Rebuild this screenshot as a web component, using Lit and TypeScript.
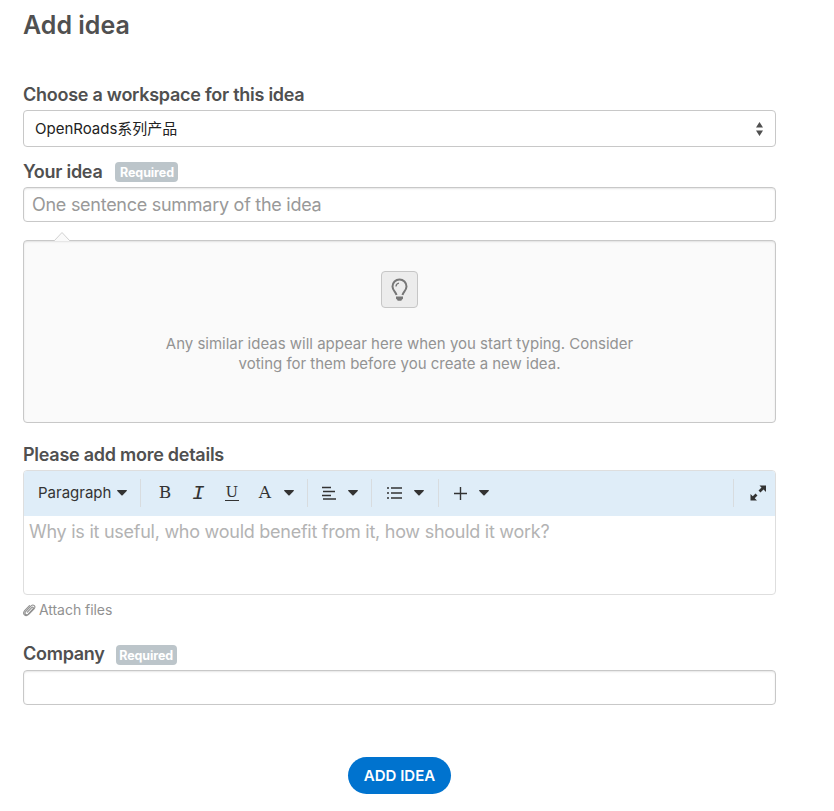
import { LitElement, html, css, svg } from "lit";
import { customElement } from "lit/decorators.js";

const caret = html`<svg class="caret" width="10" height="6" viewBox="0 0 10 6"><path d="M.6 0h8.8q.9.2.3 1L5.6 5.2q-.6.6-1.2 0L.3 1Q-.3.2.6 0z" fill="currentColor"/></svg>`;
const icon = (w: number, h: number, body: unknown) =>
  html`<svg width=${w} height=${h} viewBox="0 0 ${w} ${h}" fill="none" stroke="currentColor">${body}</svg>`;

@customElement("app-root")
export class AppRoot extends LitElement {
  static styles = css`
    :host { display: block; height: 811px; overflow: hidden; background: #fff; color: #505050; font-family: Inter, "Noto Sans CJK SC", sans-serif; }
    * { box-sizing: border-box; }
    svg { display: block; flex: none; }
    .form { width: 753px; margin-left: 23px; display: flex; flex-direction: column; }
    h1 { margin: 0; padding-top: 10px; height: 80px; font-size: 25px; line-height: 30px; font-weight: 600; }
    .label { display: flex; align-items: center; height: 30px; padding-bottom: 2px; font-size: 18px; font-weight: 600; letter-spacing: -0.26px; white-space: nowrap; }
    .idea-label { height: 40px; padding: 9px 0 0; }
    .company-label { height: 34px; margin-top: 11px; padding-bottom: 0; }
    .badge { display: flex; align-items: center; justify-content: center; width: 63px; height: 20px; margin-left: 12px; padding: 2px 0 0 2px; border-radius: 4px; background: #bcc5ca; color: #fff; font-size: 12.5px; font-weight: 700; letter-spacing: -0.1px; }
    .badge.narrow { width: 61px; margin-left: 11px; padding-left: 0; margin-top: 3px; }
    .box { display: flex; align-items: center; border: 1px solid #c8c8c8; border-radius: 4px; }
    .select { height: 37px; justify-content: space-between; padding: 0 12px 0 11px; font-size: 15px; color: #222; }
    .select span { margin-top: -2px; }
    .input { height: 35px; padding: 0 8px 1px; font-size: 18px; letter-spacing: -0.27px; color: #999; box-shadow: inset 0 1px 2px rgba(0,0,0,.1); }
    .similar { position: relative; height: 183px; margin-top: 18px; flex-direction: column; padding-top: 30px; background: #fafafa; box-shadow: inset 0 1px 2px rgba(0,0,0,.1); font-size: 15px; line-height: 20px; letter-spacing: -0.01px; color: #939393; text-align: center; }
    .notch { position: absolute; left: 30px; top: -10px; }
    .bulb { display: flex; align-items: center; justify-content: center; width: 37px; height: 37px; border: 1px solid #c6c6c6; border-radius: 4px; background: #ececec; color: #777; margin-bottom: 26px; }
    .details { height: 32px; margin-top: 16px; }
    .editor { height: 125px; margin-top: -1px; border: 1px solid #dedede; border-radius: 4px; overflow: hidden; }
    .toolbar { display: flex; align-items: center; height: 45px; padding-bottom: 1px; background: #dfedf8; color: #333; font-size: 15px; }
    .group { display: flex; align-items: center; height: 28px; border-right: 1px solid #d8dcdf; }
    .para { width: 117px; padding-left: 14px; gap: 6px; }
    .para span { margin-top: -2px; }
    .style { width: 167px; padding-left: 16px; }
    .glyph { width: 16px; font: 17px/20px "DejaVu Serif", serif; text-align: center; margin: -2px 17.4px 0 0; }
    .glyph.it { font: italic 21px/20px "Liberation Mono", monospace; margin-top: 1px; }
    .glyph.un { height: 16px; line-height: 14px; font-size: 15px; border-bottom: 1px solid #333; width: 14px; margin: -1px 18px 0 1px; }
    .glyph.last { margin-right: 11px; }
    .align { width: 64px; padding-left: 14px; gap: 12px; }
    .list { width: 67px; padding-left: 15px; gap: 12px; }
    .plus { padding-left: 15px; gap: 12px; border: 0; }
    .full { margin-left: auto; width: 42px; border-right: 0; border-left: 1px solid #d8dcdf; padding-left: 16px; }
    .hint { padding: 5px; font-size: 18px; line-height: 22px; color: #b3b3b3; letter-spacing: -0.26px; }
    .attach { display: flex; align-items: center; height: 30px; padding-bottom: 1px; gap: 3px; font-size: 14px; color: #919191; letter-spacing: -0.05px; }
    .submit { align-self: center; width: 103px; height: 37px; margin-top: 52px; padding: 0; border: 0; border-radius: 19px; background: #0073cf; color: #fff; font: 600 15px Inter, sans-serif; white-space: nowrap; }
  `;

  render() {
    return html`<div class="form">
      <h1>Add idea</h1>
      <div class="label">Choose a workspace for this idea</div>
      <div class="box select"><span>OpenRoads系列产品</span>
        <svg width="7" height="14" viewBox="0 0 7 14"><path d="M0 5.5 3.5 0 7 5.5zM0 8.5h7L3.5 14z" fill="#505050"/></svg>
      </div>
      <div class="label idea-label">Your idea<span class="badge">Required</span></div>
      <div class="box input">One sentence summary of the idea</div>
      <div class="box similar">
        <svg class="notch" width="16" height="10" viewBox="0 0 16 10"><path d="M0 10 8 1.5 16 10" fill="#fafafa" stroke="#d0d0d0"/></svg>
        <div class="bulb">${icon(18, 24, svg`<path d="M5.500 17C5 14 1.500 12.500 1.500 8.500a7 7 0 0 1 14 0c0 4-3.500 5.500-4 8.500" stroke-width="2"/><path d="M5 8.500q.2-3 3-3.300" stroke-width="1.300"/><path d="M5 18.500h7v2.200L10.500 22v.8h-4V22L5 20.700z" fill="currentColor" stroke="none"/>`)}</div>
        <div>Any similar ideas will appear here when you start typing. Consider<br>voting for them before you create a new idea.</div>
      </div>
      <div class="label details">Please add more details</div>
      <div class="editor">
        <div class="toolbar">
          <div class="group para"><span>Paragraph</span>${caret}</div>
          <div class="group style"><span class="glyph">B</span><span class="glyph it">I</span><span class="glyph un">U</span><span class="glyph last">A</span>${caret}</div>
          <div class="group align">${icon(14, 14, svg`<path d="M0 1.500h9M1 5.500h12M0 9.500h9M1 13h13" stroke-width="1.3"/>`)}${caret}</div>
          <div class="group list">${icon(15, 12, svg`<path d="M4 1h11M4 6h11M4 11h11" stroke-width="1.3"/><path d="M0 1h2M0 6h2M0 11h2" stroke-width="1.6"/>`)}${caret}</div>
          <div class="group plus">${icon(13, 13, svg`<path d="M6.500 0v13M0 6.500h13" stroke-width="1.400"/>`)}${caret}</div>
          <div class="group full">${icon(16, 16, svg`<path d="M9.500 6.500 13 3M6.500 9.500 3 13" stroke-width="2.800"/><path d="M9.500 .5H16V7zM.5 9v6.500H7z" fill="currentColor" stroke="none"/>`)}</div>
        </div>
        <div class="hint">Why is it useful, who would benefit from it, how should it work?</div>
      </div>
      <div class="attach"><svg width="13" height="14" viewBox="0 0 24 26" fill="none" stroke="currentColor" stroke-width="2" stroke-linecap="round"><path d="m8 17 8-8.500c2-2 4.500.5 2.500 2.500l-9 9.500c-3.500 3.500-8-1-4.700-4.500L15 5.300c4.300-4 9.500 1 5.500 5.500l-10 10.500c-6 5.500-12.500-1-7.500-7L12 5"/></svg>Attach files</div>
      <div class="label company-label">Company<span class="badge narrow">Required</span></div>
      <div class="box input"></div>
      <button class="submit">ADD IDEA</button>
    </div>`;
  }
}
